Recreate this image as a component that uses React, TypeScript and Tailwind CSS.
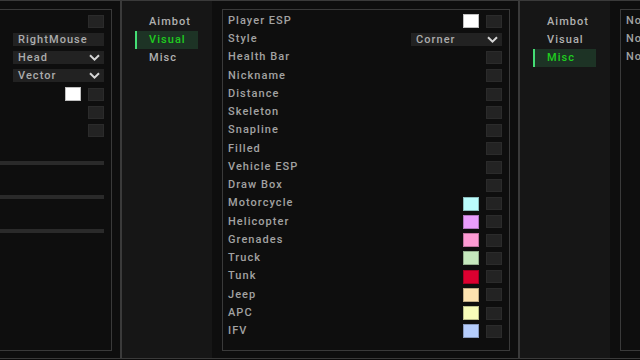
import React from "react";

type Row =
  | { kind: "check"; label: string; color?: string }
  | { kind: "select"; label: string; value: string; arrow?: boolean }
  | { kind: "slider"; label: string };

const tabs = ["Aimbot", "Visual", "Misc"];

// labels of the left window sit outside the view, only the controls show
const aimbotRows: Row[] = [
  { kind: "check", label: "" },
  { kind: "select", label: "", value: "RightMouse", arrow: false },
  { kind: "select", label: "", value: "Head" },
  { kind: "select", label: "", value: "Vector" },
  { kind: "check", label: "", color: "#ffffff" },
  { kind: "check", label: "" },
  { kind: "check", label: "" },
  { kind: "slider", label: "" },
  { kind: "slider", label: "" },
  { kind: "slider", label: "" },
];

const visualRows: Row[] = [
  { kind: "check", label: "Player ESP", color: "#ffffff" },
  { kind: "select", label: "Style", value: "Corner" },
  { kind: "check", label: "Health Bar" },
  { kind: "check", label: "Nickname" },
  { kind: "check", label: "Distance" },
  { kind: "check", label: "Skeleton" },
  { kind: "check", label: "Snapline" },
  { kind: "check", label: "Filled" },
  { kind: "check", label: "Vehicle ESP" },
  { kind: "check", label: "Draw Box" },
  { kind: "check", label: "Motorcycle", color: "#bafcfc" },
  { kind: "check", label: "Helicopter", color: "#e99cfc" },
  { kind: "check", label: "Grenades", color: "#fc9bd3" },
  { kind: "check", label: "Truck", color: "#c5e8bd" },
  { kind: "check", label: "Tunk", color: "#dc0030" },
  { kind: "check", label: "Jeep", color: "#fde3b0" },
  { kind: "check", label: "APC", color: "#f7fcb9" },
  { kind: "check", label: "IFV", color: "#b5cdfc" },
];

const miscRows: Row[] = [
  { kind: "check", label: "No Recoil" },
  { kind: "check", label: "No Spread" },
  { kind: "check", label: "No Sway" },
];

const Chevron = () => (
  <svg width="11" height="7" viewBox="0 0 11 7" className="shrink-0">
    <polyline points="1,1.2 5.5,5.6 10,1.2" fill="none" stroke="#d6d6d6" strokeWidth="2" />
  </svg>
);

const Checkbox = () => (
  <div className="h-[13px] w-[16px] border border-[#2b2b2b] bg-[#232323]" />
);

const RowItem = ({ row }: { row: Row }) => {
  if (row.kind === "slider") {
    return (
      <div className="flex h-[34px] flex-col pl-[5px] pr-[7px]">
        <div className="flex h-[18px] items-center text-[#a2a2a2]">{row.label}</div>
        <div className="mt-[3px] h-[4px] w-full bg-[#2a2a2a]" />
      </div>
    );
  }
  return (
    <div className="flex h-[18.25px] items-center justify-between pl-[5px] pr-[7px]">
      <span className="text-[#a2a2a2]">{row.label}</span>
      {row.kind === "select" ? (
        <div className="flex h-[13px] w-[91px] items-center justify-between bg-[#222222] pl-[5px] pr-[4px] text-[#acacac]">
          <span className="leading-none">{row.value}</span>
          {row.arrow !== false && <Chevron />}
        </div>
      ) : (
        <div className="flex items-center gap-[7px]">
          {row.color && (
            <div
              className="h-[14px] w-[16px] border border-black/25"
              style={{ backgroundColor: row.color }}
            />
          )}
          <Checkbox />
        </div>
      )}
    </div>
  );
};

const Window = ({ active, rows }: { active: string; rows: Row[] }) => (
  <div className="flex h-[359px] w-[398px] shrink-0 border-y border-l-2 border-[#3a3a3a] bg-[#0e0e0e]">
    {/* Sidebar tabs */}
    <div className="w-[90px] shrink-0 bg-[#161616] pt-[12px]">
      {tabs.map((t) =>
        t === active ? (
          <div
            key={t}
            className="ml-[13px] flex h-[18px] w-[63px] items-center border-l-2 border-[#44dd74] bg-[#1d3325] pl-[12px] text-[#1fcc1f]"
          >
            {t}
          </div>
        ) : (
          <div key={t} className="ml-[13px] flex h-[18px] w-[63px] items-center pl-[14px] text-[#b0b0b0]">
            {t}
          </div>
        )
      )}
    </div>
    {/* Content */}
    <div className="flex-1 pb-[7px] pl-[10px] pr-[8px] pt-[8px]">
      <div className="h-full border border-[#3a3a3a] bg-[#0e0e0e] pt-[2px]">
        {rows.map((r, i) => (
          <RowItem key={i} row={r} />
        ))}
      </div>
    </div>
  </div>
);

export default function App() {
  return (
    <div
      className="h-[360px] w-[640px] overflow-hidden bg-[#0b0b0b] text-[11px] font-medium tracking-[1.05px]"
      style={{ fontFamily: "Roboto, 'Noto Sans', sans-serif" }}
    >
      <div className="-ml-[278px] flex">
        <Window active="Aimbot" rows={aimbotRows} />
        <Window active="Visual" rows={visualRows} />
        <Window active="Misc" rows={miscRows} />
      </div>
    </div>
  );
}
